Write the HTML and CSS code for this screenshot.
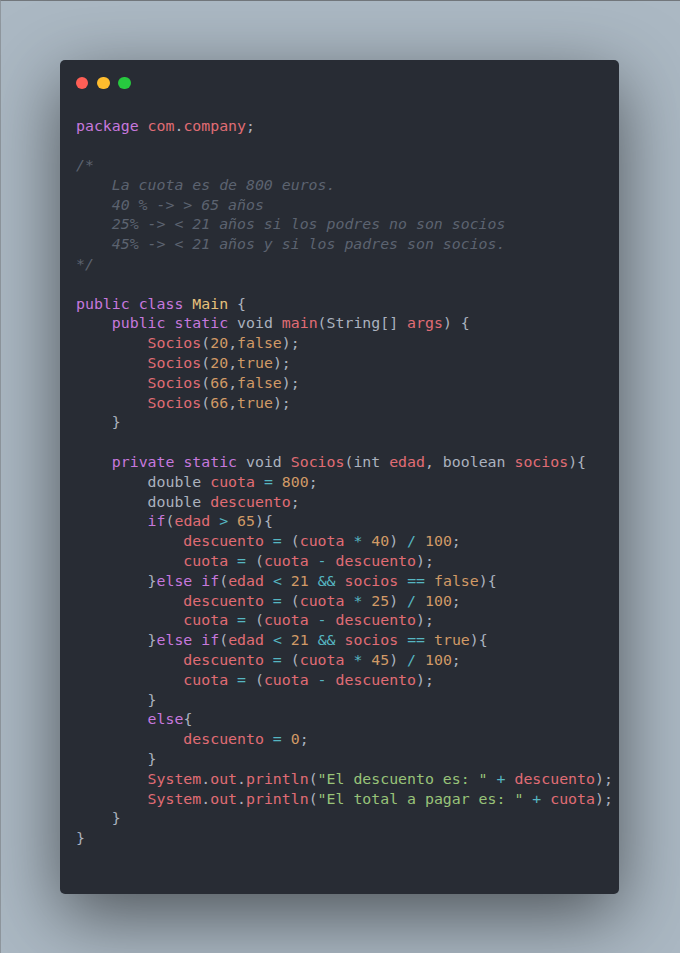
FILE: index.html
```html
<!DOCTYPE html>
<html lang="es">
<head>
<meta charset="utf-8">
<title>Main.java</title>
<link rel="stylesheet" href="styles.css">
</head>
<body>
<div class="canvas">
  <div class="window">
    <div class="titlebar">
      <span class="dot dot-red"></span>
      <span class="dot dot-yellow"></span>
      <span class="dot dot-green"></span>
    </div>
<pre class="code"><code><span class="k">package</span> <span class="v">com</span>.<span class="v">company</span>;

<span class="c">/*
    La cuota es de 800 euros.
    40 % -&gt; &gt; 65 años
    25% -&gt; &lt; 21 años si los podres no son socios
    45% -&gt; &lt; 21 años y si los padres son socios.
*/</span>

<span class="k">public</span> <span class="k">class</span> <span class="t">Main</span> {
    <span class="k">public</span> <span class="k">static</span> void <span class="v">main</span>(String[] <span class="v">args</span>) {
        <span class="v">Socios</span>(<span class="n">20</span>,<span class="n">false</span>);
        <span class="v">Socios</span>(<span class="n">20</span>,<span class="n">true</span>);
        <span class="v">Socios</span>(<span class="n">66</span>,<span class="n">false</span>);
        <span class="v">Socios</span>(<span class="n">66</span>,<span class="n">true</span>);
    }

    <span class="k">private</span> <span class="k">static</span> void <span class="v">Socios</span>(int <span class="v">edad</span>, boolean <span class="v">socios</span>){
        double <span class="v">cuota</span> <span class="o">=</span> <span class="n">800</span>;
        double <span class="v">descuento</span>;
        <span class="k">if</span>(<span class="v">edad</span> <span class="o">&gt;</span> <span class="n">65</span>){
            <span class="v">descuento</span> <span class="o">=</span> (<span class="v">cuota</span> <span class="o">*</span> <span class="n">40</span>) <span class="o">/</span> <span class="n">100</span>;
            <span class="v">cuota</span> <span class="o">=</span> (<span class="v">cuota</span> <span class="o">-</span> <span class="v">descuento</span>);
        }<span class="k">else</span> <span class="k">if</span>(<span class="v">edad</span> <span class="o">&lt;</span> <span class="n">21</span> <span class="o">&amp;&amp;</span> <span class="v">socios</span> <span class="o">==</span> <span class="n">false</span>){
            <span class="v">descuento</span> <span class="o">=</span> (<span class="v">cuota</span> <span class="o">*</span> <span class="n">25</span>) <span class="o">/</span> <span class="n">100</span>;
            <span class="v">cuota</span> <span class="o">=</span> (<span class="v">cuota</span> <span class="o">-</span> <span class="v">descuento</span>);
        }<span class="k">else</span> <span class="k">if</span>(<span class="v">edad</span> <span class="o">&lt;</span> <span class="n">21</span> <span class="o">&amp;&amp;</span> <span class="v">socios</span> <span class="o">==</span> <span class="n">true</span>){
            <span class="v">descuento</span> <span class="o">=</span> (<span class="v">cuota</span> <span class="o">*</span> <span class="n">45</span>) <span class="o">/</span> <span class="n">100</span>;
            <span class="v">cuota</span> <span class="o">=</span> (<span class="v">cuota</span> <span class="o">-</span> <span class="v">descuento</span>);
        }
        <span class="k">else</span>{
            <span class="v">descuento</span> <span class="o">=</span> <span class="n">0</span>;
        }
        <span class="v">System</span>.<span class="v">out</span>.<span class="v">println</span>(<span class="s">"El descuento es: "</span> <span class="o">+</span> <span class="v">descuento</span>);
        <span class="v">System</span>.<span class="v">out</span>.<span class="v">println</span>(<span class="s">"El total a pagar es: "</span> <span class="o">+</span> <span class="v">cuota</span>);
    }
}</code></pre>
  </div>
</div>
</body>
</html>
```
FILE: styles.css
```css
html, body {
  margin: 0;
  padding: 0;
}

body {
  background: #abb8c3;
}

.canvas {
  box-sizing: border-box;
  min-height: 953px;
  padding: 59px 0 0 59px;
  background: #abb8c3;
  border-top: 1px solid #72777c;
  border-left: 1px solid #8f979e;
}

.window {
  width: 559px;
  background: #282c34;
  border-radius: 5px;
  box-shadow: 0 21px 72px rgba(0, 0, 0, 0.55);
}

.titlebar {
  box-sizing: border-box;
  height: 56.5px;
  padding: 16.6px 0 0 15.6px;
  display: flex;
  align-items: flex-start;
  gap: 8.5px;
}

.dot {
  width: 12.75px;
  height: 12.75px;
  border-radius: 50%;
  display: block;
}

.dot-red { background: #ff5f56; }
.dot-yellow { background: #ffbd2e; }
.dot-green { background: #27c93f; }

.code {
  margin: 0;
  padding: 0 0 45px 16px;
  font-family: "DejaVu Sans Mono", "Liberation Mono", monospace;
  font-size: 14.875px;
  line-height: 19.79px;
  color: #abb2bf;
  white-space: pre;
  overflow: visible;
}

.code code {
  font-family: inherit;
}

.k { color: #c678dd; }
.v { color: #e06c75; }
.n { color: #d19a66; }
.s { color: #98c379; }
.o { color: #56b6c2; }
.t { color: #e5c07b; }
.c { color: #5c6370; font-style: italic; }
```
